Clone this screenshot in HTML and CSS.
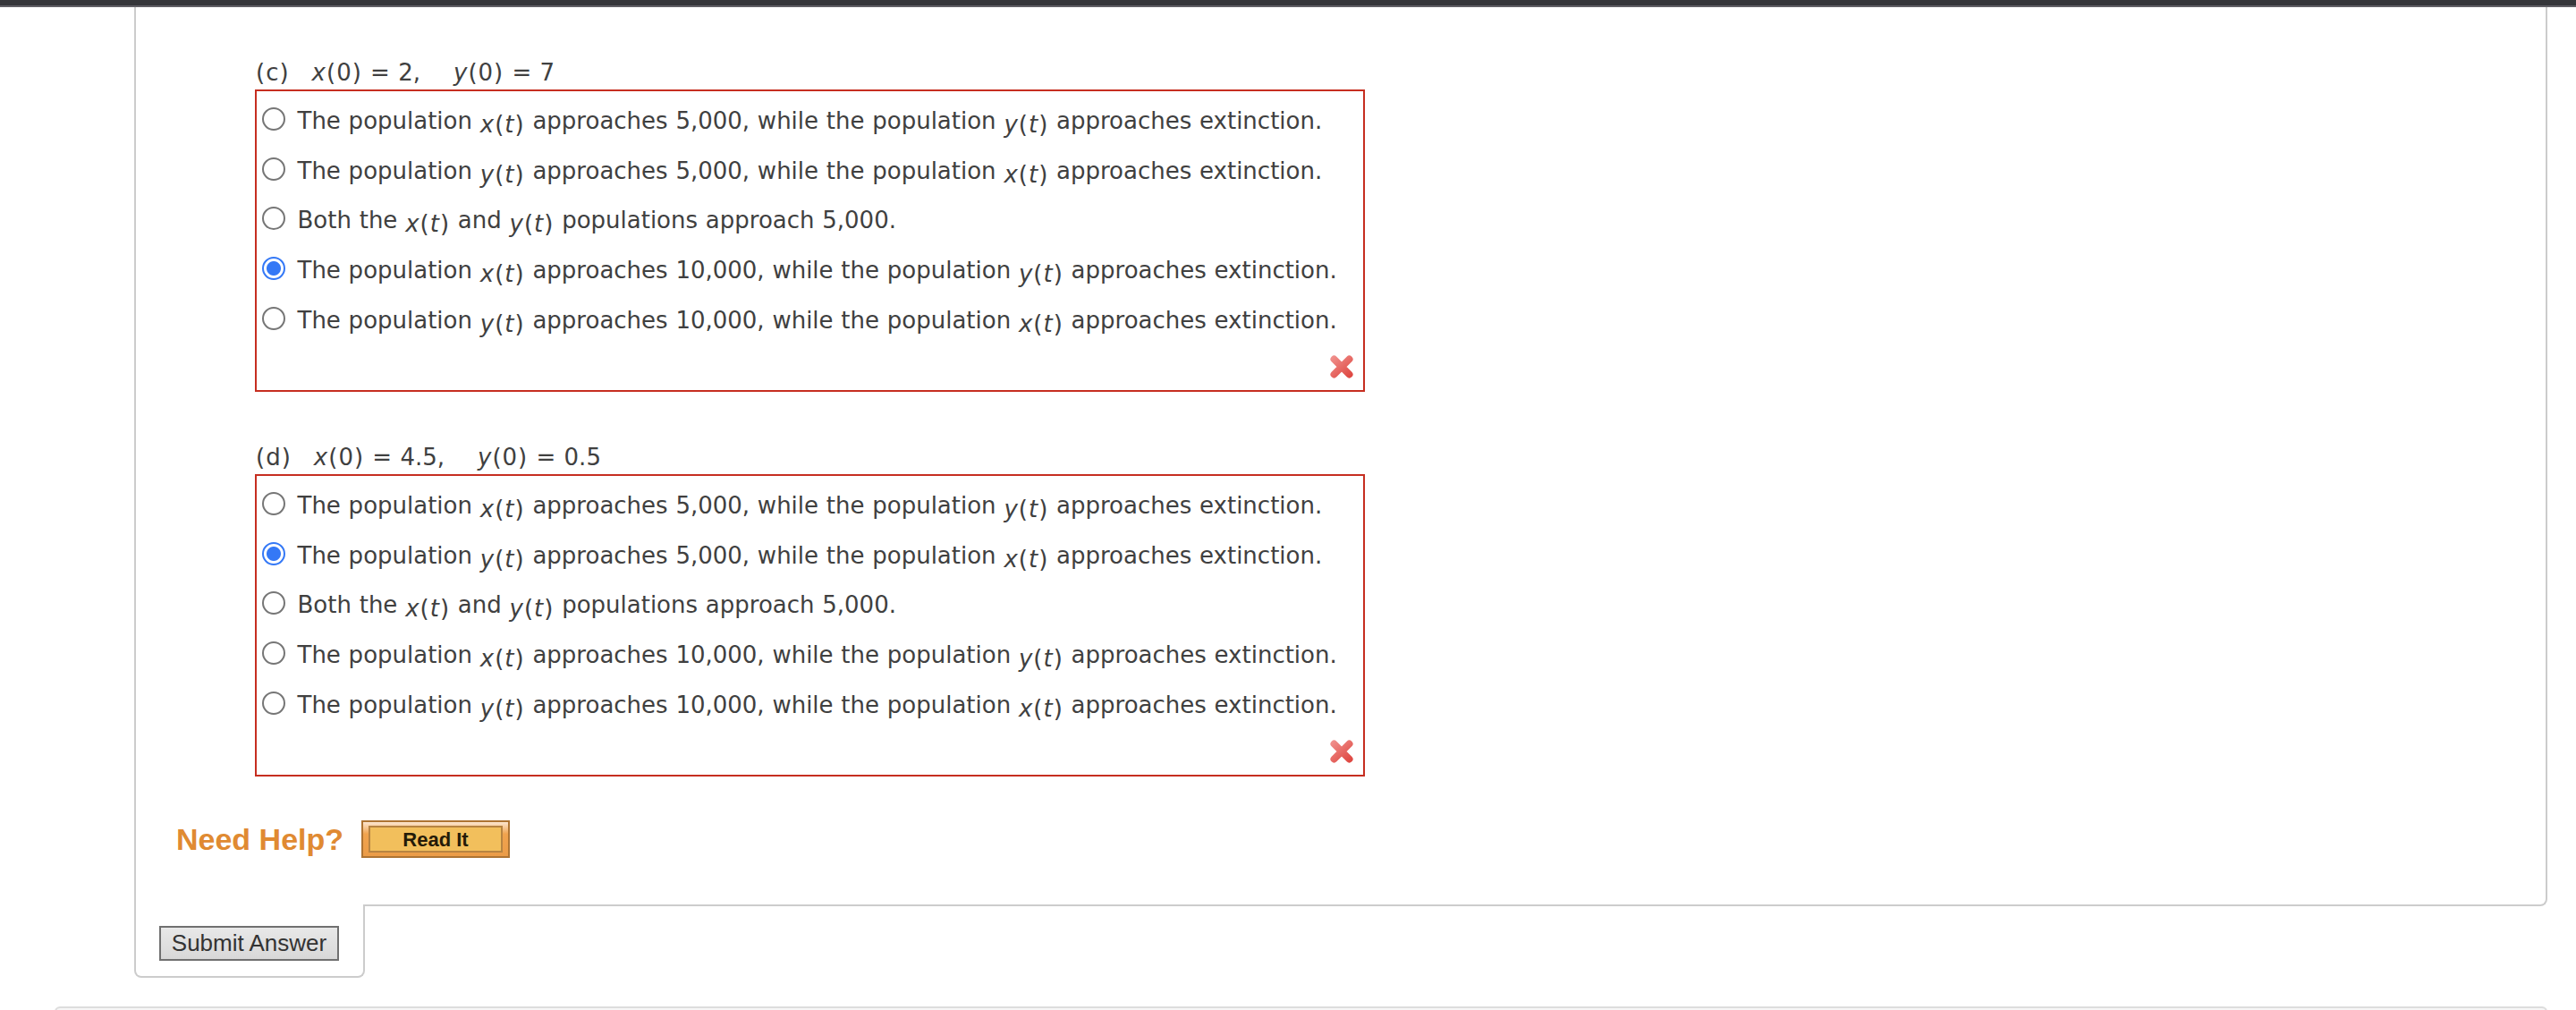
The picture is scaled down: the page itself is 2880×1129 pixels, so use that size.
FILE: index.html
```html
<!DOCTYPE html>
<html lang="en">

    <head>
        <meta charset="UTF-8">
        <meta name="viewport" content="width=device-width, initial-scale=1.0">
        <title>Question</title>
        <link rel="stylesheet" href="styles.css">
    </head>

    <body>
        <div class="topbar"></div>
        <div class="question">
            <div class="part">
                <div class="part-title"><span class="label"><b>(</b>c<b>)</b></span><i>x</i><b>(</b>0<b>)</b> = 2,<span class="gap"></span><i>y</i><b>(</b>0<b>)</b> = 7</div>
                <div class="answers">
                    <label class="option"><input type="radio" name="c"><span>The population <span class="fn"><i>x</i><b>(</b><i>t</i><b>)</b></span> approaches 5,000, while the population <span class="fn"><i>y</i><b>(</b><i>t</i><b>)</b></span> approaches extinction.</span></label>
                    <label class="option"><input type="radio" name="c"><span>The population <span class="fn"><i>y</i><b>(</b><i>t</i><b>)</b></span> approaches 5,000, while the population <span class="fn"><i>x</i><b>(</b><i>t</i><b>)</b></span> approaches extinction.</span></label>
                    <label class="option"><input type="radio" name="c"><span>Both the <span class="fn"><i>x</i><b>(</b><i>t</i><b>)</b></span> and <span class="fn"><i>y</i><b>(</b><i>t</i><b>)</b></span> populations approach 5,000.</span></label>
                    <label class="option"><input type="radio" name="c" checked><span>The population <span class="fn"><i>x</i><b>(</b><i>t</i><b>)</b></span> approaches 10,000, while the population <span class="fn"><i>y</i><b>(</b><i>t</i><b>)</b></span> approaches extinction.</span></label>
                    <label class="option"><input type="radio" name="c"><span>The population <span class="fn"><i>y</i><b>(</b><i>t</i><b>)</b></span> approaches 10,000, while the population <span class="fn"><i>x</i><b>(</b><i>t</i><b>)</b></span> approaches extinction.</span></label>
                    <svg class="wrong" viewBox="0 0 28 28">
                        <defs>
                            <linearGradient id="red" gradientUnits="userSpaceOnUse" x1="4" y1="2" x2="24" y2="26">
                                <stop offset="0" stop-color="#f0908c"/>
                                <stop offset="1" stop-color="#de453f"/>
                            </linearGradient>
                        </defs>
                        <path fill="none" stroke="url(#red)" stroke-width="8" stroke-linecap="round" d="M5.5 5.5 L22.5 22.5 M22.5 5.5 L5.5 22.5"/>
                    </svg>
                </div>
            </div>

            <div class="part">
                <div class="part-title"><span class="label"><b>(</b>d<b>)</b></span><i>x</i><b>(</b>0<b>)</b> = 4.5,<span class="gap"></span><i>y</i><b>(</b>0<b>)</b> = 0.5</div>
                <div class="answers">
                    <label class="option"><input type="radio" name="d"><span>The population <span class="fn"><i>x</i><b>(</b><i>t</i><b>)</b></span> approaches 5,000, while the population <span class="fn"><i>y</i><b>(</b><i>t</i><b>)</b></span> approaches extinction.</span></label>
                    <label class="option"><input type="radio" name="d" checked><span>The population <span class="fn"><i>y</i><b>(</b><i>t</i><b>)</b></span> approaches 5,000, while the population <span class="fn"><i>x</i><b>(</b><i>t</i><b>)</b></span> approaches extinction.</span></label>
                    <label class="option"><input type="radio" name="d"><span>Both the <span class="fn"><i>x</i><b>(</b><i>t</i><b>)</b></span> and <span class="fn"><i>y</i><b>(</b><i>t</i><b>)</b></span> populations approach 5,000.</span></label>
                    <label class="option"><input type="radio" name="d"><span>The population <span class="fn"><i>x</i><b>(</b><i>t</i><b>)</b></span> approaches 10,000, while the population <span class="fn"><i>y</i><b>(</b><i>t</i><b>)</b></span> approaches extinction.</span></label>
                    <label class="option"><input type="radio" name="d"><span>The population <span class="fn"><i>y</i><b>(</b><i>t</i><b>)</b></span> approaches 10,000, while the population <span class="fn"><i>x</i><b>(</b><i>t</i><b>)</b></span> approaches extinction.</span></label>
                    <svg class="wrong" viewBox="0 0 28 28">
                        <path fill="none" stroke="url(#red)" stroke-width="8" stroke-linecap="round" d="M5.5 5.5 L22.5 22.5 M22.5 5.5 L5.5 22.5"/>
                    </svg>
                </div>
            </div>

            <div class="help">
                <span class="help-text">Need Help?</span>
                <button type="button" class="btn-read"><span>Read It</span></button>
            </div>
        </div>
        <div class="submit-tab">
            <button type="button" class="btn-submit">Submit Answer</button>
        </div>
        <div class="next-question"></div>
    </body>

</html>
```

FILE: styles.css
```css
* {
    box-sizing: border-box;
}

body {
    margin: 0;
    height: 1129px;
    overflow: hidden;
    background-color: #fff;
    color: #404040;
    font-family: Verdana, "DejaVu Sans", sans-serif;
    font-size: 26px;
}

.topbar {
    height: 8px;
    background-color: #35363a;
    border-bottom: 2px solid #5f5e64;
}

.question {
    width: 2698px;
    height: 1005px;
    margin-left: 150px;
    padding: 54px 0 0 133px;
    border: 2px solid #ccc;
    border-top: none;
    border-radius: 0 0 8px 0;
}

.part {
    width: 1241px;
    margin-bottom: 54px;
}

.part-title {
    height: 38px;
    line-height: 38px;
    white-space: pre;
    word-spacing: 1px;
}

/* upright parentheses with a little air */
.part b {
    padding: 0 1px;
    font-weight: normal;
}

.label {
    display: inline-block;
    margin-right: 25px;
}

.gap {
    display: inline-block;
    width: 37px;
}

.answers {
    height: 338px;
    padding: 3px 10px 0 6px;
    border: 2px solid #c62e20;
}

.option {
    display: flex;
    align-items: center;
    height: 55.75px;
    white-space: nowrap;
    word-spacing: 0.5px;
}

.option > span {
    padding-top: 4px;
    line-height: 30px;
}

.option input {
    appearance: none;
    flex: none;
    width: 26px;
    height: 26px;
    margin: 0 13.5px 0 0;
    border: 2px solid #767676;
    border-radius: 50%;
    background-color: #fff;
}

.option input:checked {
    border-color: #3478f6;
    background: radial-gradient(circle, #3478f6 7.5px, #fff 8.5px);
}

.fn {
    line-height: 0;
    vertical-align: -4px;
}

.wrong {
    display: block;
    width: 28px;
    height: 28px;
    margin: 12px 0 0 auto;
}

.help {
    display: flex;
    align-items: center;
    height: 42px;
    margin: -5px 0 0 -88px;
}

.help-text {
    width: 207px;
    color: #e08a32;
    font: bold 34px/42px "Liberation Sans", Arial, sans-serif;
}

.btn-read {
    width: 166px;
    height: 42px;
    padding: 4px 6px;
    border: 2px solid #ae7433;
    background: linear-gradient(#fce6d0, #f0a34e 35%, #eb9c48);
}

.btn-read span {
    display: block;
    height: 30px;
    border: 2px solid #b78442;
    background-color: #f2bf5c;
    color: #251b08;
    font: bold 22px/28px "Liberation Sans", Arial, sans-serif;
}

.submit-tab {
    position: relative;
    width: 258px;
    height: 82px;
    margin: -2px 0 0 150px;
    padding: 24px 0 0 26px;
    border: 2px solid #ccc;
    border-top: none;
    border-radius: 0 0 8px 8px;
    background-color: #fff;
}

.btn-submit {
    display: block;
    width: 201px;
    height: 39px;
    padding: 0;
    border: 2px solid #707070;
    background: linear-gradient(#e8e8e8, #d8d8d8);
    color: #333;
    font: 26px/35px "Liberation Sans", Arial, sans-serif;
}

.next-question {
    width: 2787px;
    height: 60px;
    margin: 32px 0 0 61px;
    border: 2px solid #ddd;
    border-radius: 6px;
    background-color: #f6f6f6;
}
```
